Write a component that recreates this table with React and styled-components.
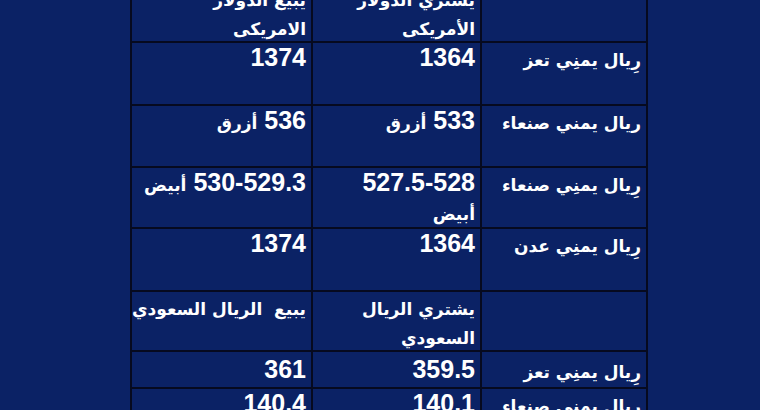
import React from 'react';
import styled, { createGlobalStyle } from 'styled-components';

const GlobalStyle = createGlobalStyle`
  html, body {
    margin: 0;
    padding: 0;
    background: #0b2265;
    overflow: hidden;
  }
  body {
    width: 760px;
    height: 410px;
    font-family: "Liberation Sans", "DejaVu Sans", sans-serif;
  }
`;

const colWidths = [166, 169, 181];

const rows = [
  { h: 60, cells: [[], ['يشتري الدولار', 'الأمريكى'], ['يبيع الدولار', 'الامريكى']] },
  { h: 63, cells: [['رِيال يمنِي تعز'], ['1364'], ['1374']] },
  { h: 62, cells: [['ريال يمني صنعاء'], ['533 أزرق'], ['536 أزرق']] },
  { h: 61, cells: [['رِيال يمنِي صنعاء'], ['527.5-528', 'أبيض'], ['530-529.3 أبيض']] },
  { h: 63, cells: [['رِيال يمنِي عدن'], ['1364'], ['1374']] },
  { h: 59, cells: [[], ['يشتري الريال', 'السعودي'], ['يبيع  الريال السعودي']] },
  { h: 37, mid: true, cells: [['رِيال يمنِي تعز'], ['359.5'], ['361']] },
  { h: 60, cells: [['ريال يمني صنعاء'], ['140.1'], ['140.4']] },
];

// Arabic words are set smaller than the digits, like the source sheet
function renderLine(text) {
  return text.split(/([\u0600-\u06FF][\u0600-\u06FF\s]*)/).map((part, i) =>
    /[\u0600-\u06FF]/.test(part) ? <Arabic key={i}>{part}</Arabic> : part
  );
}

export default function App() {
  return (
    <Page>
      <GlobalStyle />
      <RateTable dir="rtl">
        <colgroup>
          {colWidths.map((w) => (
            <Col key={w} $w={w} />
          ))}
        </colgroup>
        <tbody>
          {rows.map((row, i) => (
            <Row key={i} $h={row.h}>
              {row.cells.map((lines, j) => (
                <Cell key={j} $mid={row.mid}>
                  {lines.map((line, k) => (
                    <Line key={k}>{renderLine(line)}</Line>
                  ))}
                </Cell>
              ))}
            </Row>
          ))}
        </tbody>
      </RateTable>
    </Page>
  );
}

const Page = styled.div`
  width: 760px;
  height: 410px;
  overflow: hidden;
  padding-left: 130px;
  box-sizing: border-box;
`;

const RateTable = styled.table`
  margin-top: -19px;
  border-collapse: collapse;
  table-layout: fixed;
  width: 516px;
  color: #ffffff;
`;

const Col = styled.col`
  width: ${(p) => p.$w}px;
`;

const Row = styled.tr`
  height: ${(p) => p.$h}px;
`;

const Cell = styled.td`
  border: 2px solid #060a1f;
  padding: 0 5px;
  vertical-align: ${(p) => (p.$mid ? 'middle' : 'top')};
  text-align: right;
  font-size: 25px;
  font-weight: 700;
  line-height: 29px;
  white-space: pre;
`;

const Line = styled.div`
  display: block;
  height: 29px;
`;

const Arabic = styled.span`
  font-family: "DejaVu Sans", sans-serif;
  font-size: 17px;
  font-weight: 700;
  line-height: 1;
`;
